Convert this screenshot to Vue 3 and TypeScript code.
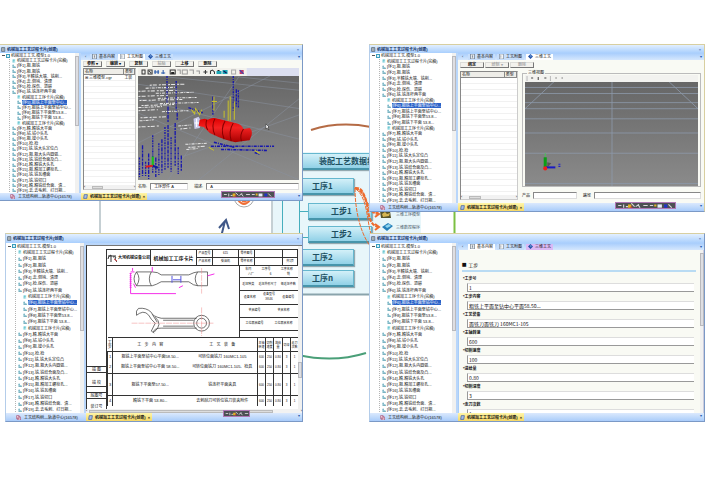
<script setup lang="ts">
interface TreeRow { t: string; l: number; k?: string; sel?: boolean }

const row = (t: string, l = 1, k = 'op', sel = false): TreeRow => ({ t, l, k, sel })

const head = (a: string, tail: TreeRow[]): TreeRow[] => [
  row('机械加工工艺-模型1.0', 0, 'root'),
  row('机械加工工艺过程卡片(完稿)', 1, 'card'),
  row('[序1]-粗-粗铣'),
  row('[序2]-粗-粗铣'),
  row('[序3]-半精铣大端、铣削...'),
  row('[序4]-去-倒钝、清理'),
  row('[序5]-检-探伤、退磁'),
  row('[序6]-铣-铣连杆两平面'),
  row('机械加工工序卡片(完稿)', 2, 'card'),
  row(a, 2, 'op', true),
  ...tail,
]

const tail: TreeRow[] = [
  row('[序7]-粗铣上平面至钻中心...', 2),
  row('[序8]-粗铣下平面至53.8...', 2),
  row('[序9]-粗铣下平面 53.8...', 2),
  row('机械加工工序卡片(完稿)', 2, 'card'),
  row('[序7]-精-精铣大平面'),
  row('[序8]-钻-钻小头孔'),
  row('[序9]-粗-镗小头孔'),
  row('[序10]-检-检'),
  row('[序11]-铣-铣大头定位凸'),
  row('[序12]-粗-粗大头内圆弧...'),
  row('[序13]-铣-铣结合面及凸...'),
  row('[序14]-精-精铣大头孔'),
  row('[序15]-粗-精加工螺栓孔...'),
  row('[序16]-铣-铣瓦槽面'),
  row('[序17]-铣-铣切口'),
  row('[序18]-精-精铣结合面、清...'),
  row('[序19]-去-去毛刺、打日期...'),
]

const treeA = head('[序5]-粗铣上平面至中心...', tail)
const treeB = head('[序6]-粗铣上平面至钻中心...', tail)

const title = '机械加工工艺过程卡片(创建)'
const docTab = '工艺结构树—轨道中心(16578)'

const wins = [
  { id: 'a', tree: treeA },
  { id: 'b', tree: treeB },
  { id: 'c', tree: treeB },
  { id: 'd', tree: treeB },
]

const fields = [
  ['工步号', '1'],
  ['工步内容', '粗铣上平面至钻中心平面58.50...'],
  ['工艺装备', '面铣刀面铣刀 160MC1-105'],
  ['主轴转速', '600'],
  ['切削速度', '100'],
  ['进给量', '0.80'],
  ['切削深度', '3'],
  ['走刀次数', '1'],
]

const whiteMarks = [
  [12, 9, 46], [8, 12, 38], [1, 15, 40], [18, 17, 55], [1, 20, 30], [20, 22, 58], [2, 24, 44], [22, 27, 60], [4, 29, 36],
  [1, 31, 24], [1, 34, 20], [24, 35, 50], [3, 41, 28], [2, 44, 16], [1, 50, 22], [40, 49, 53], [42, 52, 52],
  [47, 67, 68], [50, 70, 66], [48, 72, 60],
]
const blueColumns = [
  [2, 80, 100], [5, 68, 98], [8, 84, 99], [11, 76, 101], [15, 58, 96], [18, 80, 99], [21, 66, 97], [24, 62, 95], [27, 50, 93],
  [30, 48, 90], [33, 60, 94], [37, 46, 88], [40, 70, 96], [43, 78, 94], [29, 0, 26], [30, 30, 46],
  [38, 5, 34], [39, 36, 44], [94, 0, 34], [97, 13, 30], [99, 14, 32], [74, 20, 38],
]
const gridRows = [8, 14, 23, 29, 39, 53, 73, 103]
const process = [
  ['1', '粗铣上平面至钻中心平面58.50...', '可转位面铣刀 160MC1-105'],
  ['2', '粗铣上平面至钻中心平面 58.50...', '可转位面铣刀 160MC1-105、检具'],
  ['3', '粗铣下平面至57.50...', '铣连杆平面夹具'],
  ['4', '精铣下平面 53.80...', '去刺刮刀可转位铣刀装夹附件'],
]
</script>

<template>
  <main class="stage">
    <section class="board">
      <svg class="links" width="705" height="484" viewBox="0 0 705 484" aria-hidden="true">
        <rect x="100" y="150" width="172" height="100" fill="#fff" stroke="#8ba0a8" />
        <rect x="273" y="152" width="148" height="142" fill="#e8f6fa" />
        <path d="M273 294.500H421" stroke="#8aa4ac" stroke-width="2" />
        <path d="M282.500 170V280M299.500 170V240M299 211.500H309M299 237.500H309" fill="none" stroke="#46aebd" />
        <path d="M311 130Q339 121 371 127" fill="none" stroke="#b56b45" stroke-width="2" />
        <path d="M298 355Q334 363 366 353" fill="none" stroke="#4a9f78" stroke-width="2" />
        <path d="M454.500 212V233" stroke="#7cc043" stroke-width="2" />
        <circle cx="244" cy="197" r="10" fill="#fff" stroke="#a9a9a9" />
        <path d="M238 200Q244 208 250 200M241 199Q244 204 248 199" fill="none" stroke="#ef6e35" stroke-width="2" />
        <path d="M221 237L225 221M219 228L226 220L229 229" fill="none" stroke="#405888" stroke-width="2" />
      </svg>
      <div class="node wide">装配工艺数据组织</div>
      <div class="node n1">工序1</div>
      <div class="node step s1">工步1</div>
      <div class="node step s2">工步2</div>
      <div class="node n2">工序2</div>
      <div class="node n3">工序n</div>
      <svg class="links" width="705" height="484" viewBox="0 0 705 484" aria-hidden="true">
        <g fill="none" stroke="#ee6b2d" stroke-dasharray="4 1">
          <path d="M355 188C368 186 363 212 378 214" stroke-width="2" />
          <path d="M355 188C374 196 362 222 378 227" stroke-width="2" />
          <path d="M355 188C355 210 360 232 370 246" />
          <path d="M356 189C370 200 366 230 374 240" />
        </g>
        <path d="M375 211L379 214L375 217M375 224L379 227L375 230" fill="none" stroke="#ee6b2d" stroke-width="2" />
        <path d="M380 211h10l1 7h-10z" fill="#56532b" /><path d="M382 214l3-2 2 2 3-1-1 3-6 1z" fill="#d5b653" />
        <path d="M382 227l6-4 5 3-6 5z" fill="#247fb8" /><path d="M385 226l4-2 2 2-4 2z" fill="#8dd4ef" />
      </svg>
      <span class="tag t1">三维工序模型</span>
      <span class="tag t2">三维数控程序</span>
    </section>

    <section v-for="w in wins" :key="w.id" class="win" :class="'win-' + w.id">
      <header class="titlebar">
        <svg class="ico" viewBox="0 0 8 8"><path d="M1 1h5v6H1z" fill="#fff" stroke="#234" /><path d="M2 3h3M2 5h3" stroke="#234" /></svg>
        <h2>{{ title }}</h2>
        <button class="close" aria-label="关闭">×</button>
      </header>

      <div class="body">
        <nav class="tree">
          <ul>
            <li v-for="(r, i) in w.tree" :key="i" :class="['lv' + r.l, { sel: r.sel }]">
              <svg v-if="r.l === 0" class="twist" viewBox="0 0 3 3" aria-hidden="true"><path d="M0 1h3v1H0z" fill="#555" /></svg>
              <svg class="ico" viewBox="0 0 8 8" aria-hidden="true">
                <template v-if="r.k === 'root'"><rect width="8" height="8" fill="#3b9dbd" /><path d="M2 6V2h4v4z" fill="#d8f0f5" /></template>
                <template v-else-if="r.k === 'card'"><path d="M1 0h6v8H1z" fill="#dff7fa" /><path d="M2 1v6M2 2h4M4 2v5" stroke="#22a5b5" fill="none" /></template>
                <template v-else><path d="M1 1h3v3h3v3H1z" fill="#9fcddb" /><path d="M1 7h7M2 2v3" stroke="#2b8193" fill="none" /></template>
              </svg>
              <span>{{ r.t }}</span>
            </li>
          </ul>
          <div class="vbar"><i></i></div>
        </nav>
        <div class="split"></div>

        <div class="pane">
          <div v-if="w.id !== 'c'" class="tabs">
            <span class="arrow">‹</span>
            <button class="tab" :class="{ on: w.id === 'd' }"><svg class="ico" viewBox="0 0 8 8"><path d="M1 0h6v8H1zM3 2h2M3 4h2M3 6h2" fill="#fff" stroke="#456" /></svg>基本内容</button>
            <button class="tab" :class="{ on: w.id === 'a' }"><svg class="ico" viewBox="0 0 8 8"><path d="M1 0h6v8H1zM3 2v4" fill="#fff" stroke="#678" /></svg>工艺附图</button>
            <button class="tab" :class="{ on: w.id === 'b', pink: w.id === 'd' }"><svg class="ico" viewBox="0 0 8 8"><path d="M4 0l4 4-4 4-4-4z" fill="#2453a8" /><path d="M4 1l2 2-2 2z" fill="#89b9ed" /></svg>三维工艺</button>
            <span class="drop">▾</span>
          </div>

          <div v-if="w.id === 'a' || w.id === 'b'" class="model">
            <div class="actions">
              <template v-if="w.id === 'a'">
                <button>参照 ▾</button><button>编辑 ▾</button><button>复制</button><button class="off">粘贴</button><button>上移</button><button>删除</button>
              </template>
              <template v-else>
                <button>绑定</button><button class="off">绘制 ▾</button><button class="off">删除</button>
              </template>
            </div>
            <div class="work">
              <div class="list">
                <table>
                  <thead><tr><th>名称</th><th>类型</th></tr></thead>
                  <tbody>
                    <tr><td>{{ w.id === 'a' ? '⊞ 三维模型.cgr' : '' }}</td><td>{{ w.id === 'a' ? '工装' : '' }}</td></tr>
                  </tbody>
                </table>
                <div class="hbar"><span>‹</span><i></i><span>›</span></div>
              </div>
              <div class="right">
                <div v-if="w.id === 'a'" class="view">
                  <svg class="bar" viewBox="0 0 160 8" preserveAspectRatio="xMinYMid slice">
                    <rect width="108" height="8" fill="#f2f1ec" /><rect x="108" width="60" height="8" fill="#dcdff0" />
                    <g fill="none" stroke="#333"><path d="M4 2v4h3V2zM10 2h4v4h-4zM11 3l2 2" /><path d="M17 2v4M20 2v4M16 4h5M23 5h4M25 2v4" stroke="#25a" /><path d="M32 2h5v4h-5z" /><path d="M39 2h3v4M44 2h5v4h-5zM51 2h4v4M58 3h3v3" stroke="#999" /><path d="M65 4h4M67 2v4M72 6V3l2-1 2 2v2" /><path d="M93 2h4v4h-4z" stroke="#aaa" /></g>
                    <path d="M33 4h3v2h-3zM79 2h2v4h-2z" fill="#222" /><path d="M78 3h5v3h-5zM84 2h5v4h-5z" fill="#1ba6b5" /><path d="M85 3l3 2" stroke="#115" /><path d="M101 2h4v4h-4z" fill="#c13b68" /><path d="M101 2l4 4" stroke="#224cc5" />
                  </svg>
                  <svg class="scene" viewBox="0 0 159 102" preserveAspectRatio="xMidYMid slice">
                    <defs><linearGradient id="ga" x1="0" x2="0" y1="0" y2="1"><stop stop-color="#666" /><stop offset="1" stop-color="#8d8d8d" /></linearGradient>
                      <linearGradient id="gr" x1="0" x2="0" y1="0" y2="1"><stop stop-color="#d00" /><stop offset=".4" stop-color="#f42222" /><stop offset="1" stop-color="#a50000" /></linearGradient></defs>
                    <rect width="159" height="102" fill="url(#ga)" />
                    <path d="M0 8L159 32M0 22L159 62M20 0L159 14M60 102L159 22M0 66L130 0M0 36L159 102M0 95L159 38M90 0L159 7M100 0L30 102" fill="none" stroke="#8b93a0" stroke-width=".5" />
                    <g fill="none" stroke="#e7e7e7"><path v-for="(m, i) in whiteMarks" :key="i" :d="`M${m[0]} ${m[1]}L${m[2]} ${m[1] - 1}`" :stroke-dasharray="i % 2 ? '3 1 1 1' : '2 1 4 2'" /></g>
                    <g fill="none" stroke="#1717ad"><path v-for="(m, i) in blueColumns" :key="i" :d="`M${m[0]} ${m[1]}V${m[2]}`" :stroke-dasharray="i % 2 ? '4 1 2 1' : '2 1 1 1'" stroke-width="1.300" />
                      <path d="M72 69L134 69M82 72L127 73M115 75L120 77M50 31L64 36M75 65L95 70" stroke-dasharray="3 1 1 1" stroke-width="1.500" /></g>
                    <path d="M53 33l3 4 1-5 4 6 2-5M75 20v14M73 25h5M89 24v20M91 20v24M95 25v18M85 34v7M70 70l5 3M115 73l5 3" fill="none" stroke="#c8c12b" />
                    <path d="M55 42l5-2 3 5-2 6-5 1z" fill="#c8c9eb" /><path d="M56 46h5M58 42v8" stroke="#fff" />
                    <path d="M61 43l5-1 3 1q4-3 10-1l17 4q6 1 8 6l6-1q3 2 2 7l-2 5-8 1-6 1q-9-2-16-5l-9-4-6-6-5-1z" fill="url(#gr)" />
                    <path d="M68 43q-2 5 1 10M76 42q-4 7 0 16M86 44q-5 8-1 18M94 46q-5 8-2 18M104 52q-4 6-2 12" fill="none" stroke="#870000" />
                    <path d="M15 88V79" stroke="#19c519" stroke-width="2" /><path d="M15 88l5 2" stroke="#111b99" stroke-width="2" /><path d="M15 88l-7 1" stroke="#e21a1a" stroke-width="2" />
                    <path d="M126 47v5l1-1 2 2-1-3h1z" fill="#fff" stroke="#222" stroke-width=".5" />
                  </svg>
                </div>
                <fieldset v-else class="view">
                  <legend>三维视图</legend>
                  <svg class="bar" viewBox="0 0 170 7" preserveAspectRatio="xMinYMid slice"><rect width="170" height="7" fill="#f2f2ef" /><path d="M2 1v5M25 1v5" stroke="#bbb" /><path d="M6 3h2M13 2v3M19 3h2M30 3h1M36 3h1" stroke="#444" stroke-width="1" fill="none" /></svg>
                  <svg class="scene" viewBox="0 0 171 104" preserveAspectRatio="xMidYMid slice">
                    <defs><linearGradient id="gb" x1="0" x2="0" y1="0" y2="1"><stop stop-color="#666" /><stop offset="1" stop-color="#8b8b8b" /></linearGradient></defs>
                    <rect width="171" height="104" fill="url(#gb)" />
                    <g fill="none" stroke="#8d99ab" stroke-width=".8"><path v-for="y in gridRows" :key="y" :d="`M0 ${y - 2}H171`" /><path d="M86 0V104M29 0L0 27M142 0L171 27" /></g>
                    <path d="M20 85V75" stroke="#0a9d15" stroke-width="3" /><path d="M20 74v-3" stroke="#45c653" /><path d="M22 85l4-4-4-1z" fill="#555" /><path d="M20 85H30" stroke="#1a1ac0" stroke-width="2" /><circle cx="20" cy="86" r="2" fill="#ef1d1d" /><path d="M33 82h2M33 84h2" stroke="#22c" />
                  </svg>
                </fieldset>
                <div class="foot">
                  <label :for="'p-' + w.id">{{ w.id === 'a' ? '名称:' : '产品' }}</label><input :id="'p-' + w.id" class="short" :value="w.id === 'a' ? '工序部件 A' : ''">
                  <label :for="'q-' + w.id">{{ w.id === 'a' ? '描述:' : '路径' }}</label><input :id="'q-' + w.id" class="long" :value="w.id === 'a' ? 'A' : ''">
                </div>
              </div>
            </div>
          </div>

          <div v-else-if="w.id === 'c'" class="docwrap">
            <div class="doc">
              <div class="side"><span>描 图</span><span class="gap">描 校</span><span></span><span>底图号</span><span>装订号</span></div>
              <div class="sheet">
                <div class="dochead">
                  <div class="brand"><svg viewBox="0 0 10 8"><path d="M1 2h8M4 1v7M6 3q4-1 2 2l2 3M1 5q0-3 3-4" fill="none" stroke="#333" /><path d="M7 5l3 2" stroke="#d44" /></svg>大河机械设备公司</div>
                  <strong>机械加工工序卡片</strong>
                  <div class="cells"><span>产品型号</span><span>615</span><span>零件图号</span><span></span><span></span><span>产品名称</span><span>柴油机</span><span>零件名称</span><span></span><span>共1页</span></div>
                </div>
                <div class="docmid">
                  <svg class="drawing" viewBox="0 0 132 72">
                    <g fill="none" stroke="#333" stroke-width=".7">
                      <path d="M29 6h16q6 0 9 3h28q6-3 9-3h10v14H91q-4 0-9-4H54q-5 3-9 4H29q-5-7 0-14zM29 6q5 7 0 14M44 6q-4 7 0 14M91 6q-5 7 0 14" />
                      <circle cx="95" cy="58" r="8" /><circle cx="95" cy="58" r="5" />
                      <path d="M90 53H54Q45 51 44 47q-5-5-13-4-3 2-2 7M90 63H54Q47 63 46 67M56 55h31M56 61h31M29 50l3-2q7-4 12 6l4 4-4 8 3 2M48 52q8 7-1 15M45 49l5 8" />
                    </g>
                    <path d="M23 7v21h46M23 6h4M25 2v3M45 1v5M26 18l2 4M101 10l7-2M72 22l4-2" fill="none" stroke="#f42de8" />
                    <path d="M23 7v15" stroke="#f42de8" stroke-width="2" stroke-dasharray="1 1" /><path d="M65 10v7M74 10v7M66 14h8" stroke="#5454e0" fill="none" />
                    <path d="M24 58h84M95 2v26M95 42v29" stroke="#f08989" stroke-width=".5" stroke-dasharray="6 1" />
                  </svg>
                  <div class="info">
                    <p><span>车间</span><span>工序号</span><span>工序名称</span></p>
                    <p class="line"><span>八厂</span><span>6</span><span>铣</span></p>
                    <p class="line"><span>毛坯种类</span><span>毛坯外形尺寸</span><span>每毛坯件数</span></p>
                    <p class="line"><span>设备名称</span><span>设备型号<br>XK46</span><span>设备编号</span></p>
                    <p class="line"><span>夹具编号</span><span>夹具名称</span></p>
                    <p class="line"><span>工位器具编号</span><span>工位器具名称</span></p>
                    <p class="last"></p>
                  </div>
                </div>
                <table class="proc">
                  <colgroup><col class="c0"><col class="c1"><col class="c2"><col class="c3"><col class="c3"><col class="c4"><col class="c3"><col></colgroup>
                  <thead><tr><th>工步</th><th>工 &nbsp; 步 &nbsp; 内 &nbsp; 容</th><th>工 &nbsp; 艺 &nbsp; 装 &nbsp; 备</th><th>主轴转速</th><th>切削速度</th><th>进给量</th><th>切深</th><th>走刀次数</th></tr></thead>
                  <tbody><tr v-for="p in process" :key="p[0]"><td v-for="c in p" :key="c">{{ c }}</td><td>600</td><td>250</td><td>0.80</td><td>3</td><td>1</td></tr></tbody>
                </table>
              </div>
              <div class="vbar"><i></i></div>
            </div>
            <div class="hbar"><span>‹</span><i></i><span>›</span></div>
          </div>

          <div v-else class="formwrap">
            <form class="form">
              <h3><b>■</b> 工步</h3>
              <div class="fields">
                <div v-for="(f, i) in fields" :key="f[0]" class="field"><label :for="'f' + i">*{{ f[0] }}</label><input :id="'f' + i" :value="f[1]"></div>
              </div>
            </form>
            <div class="vbar"><i></i></div>
          </div>
        </div>
      </div>

      <footer class="dock">
        <button class="doc1"><svg class="ico" viewBox="0 0 8 8"><path d="M1 1h4v5H1zM3 3h4v5H3z" fill="#fff" stroke="#a33c65" /></svg>{{ docTab }}</button>
        <button class="doc2"><svg class="ico" viewBox="0 0 8 8"><path d="M2 1h5L6 7H1z" fill="#a9bfe2" stroke="#244ba5" /></svg>{{ title }}<span>×</span></button>
        <span class="drop">▾</span>
      </footer>

      <svg v-if="w.id !== 'd'" class="float" viewBox="0 0 54 6" preserveAspectRatio="xMinYMid slice" aria-hidden="true">
        <rect width="70" height="6" fill="#4d5054" />
        <path d="M2 3h3M7 2v3M9 4h2M14 1l3 3M18 4l3-2M20 2l2 3M25 3h4M31 3h3M48 2l3 3" stroke="#d9d9d9" fill="none" /><path d="M11 2h3v3h-3zM35 2h2v2h-2z" fill="#e3b427" /><path d="M13 4h2v1h-2z" fill="#d33" /><path d="M38 2h4v3h-4z" fill="#e8edf8" /><path d="M44 2h3v3h-3z" fill="#2032c9" />
      </svg>
    </section>
  </main>
</template>

<style>
html, body { margin: 0; background: #fff; }
</style>

<style scoped>
.stage { position: relative; min-height: 100vh; overflow: hidden; font: 4px/5px "Liberation Sans", "Noto Sans CJK SC", sans-serif; color: #111; }
.stage * { box-sizing: border-box; }
button, input { font: inherit; color: inherit; margin: 0; padding: 0; border: 0; background: none; border-radius: 0; min-width: 0; white-space: nowrap; }
ul, h2, h3, p, fieldset { margin: 0; padding: 0; list-style: none; }
svg { display: block; }
i { display: block; }
.links { position: absolute; left: 0; top: 0; }
.node { position: absolute; display: flex; align-items: center; height: 17px; border: 1px solid #65b7ce; border-bottom: 2px solid #4795ab; background: linear-gradient(#d3f0f8, #91d1e7); color: #1d5062; font: bold 8px/12px "Noto Sans CJK SC", sans-serif; box-shadow: 1px 1px 1px #93a9b0; white-space: nowrap; }
.wide { left: 290px; top: 153px; width: 120px; padding-left: 28px; }
.n1, .n2, .n3 { left: 290px; width: 64px; padding-left: 21px; }
.n1 { top: 178px; }
.n2 { top: 249px; }
.n3 { top: 270px; }
.step { left: 308px; width: 64px; padding-left: 22px; }
.s1 { top: 203px; }
.s2 { top: 226px; }
.tag { position: absolute; left: 396px; color: #456; white-space: nowrap; }
.t1 { top: 212px; }
.t2 { top: 225px; }

.win { position: absolute; display: flex; flex-direction: column; border: 1px solid #7b99c6; border-top-color: #d8cfa0; border-left-color: #b4cdea; background: #f9faf4; }
.win-a { --tree: 79px; left: -1px; top: 44px; width: 304px; height: 157px; }
.win-b { --tree: 86px; left: 369px; top: 44px; right: 0; height: 168px; border-right-color: #d8cfa0; }
.win-c { --tree: 78px; left: 5px; top: 233px; width: 298px; height: 189px; }
.win-d { --tree: 86px; left: 369px; top: 233px; right: 0; height: 189px; }
.ico { flex: none; width: 5px; height: 5px; }
.titlebar { flex: none; display: flex; align-items: center; gap: 1px; height: 8px; padding: 0 3px 0 1px; background: linear-gradient(#e2efff, #a9cffd); color: #0c2b62; }
.win-c .titlebar, .win-d .titlebar { height: 9px; }
.titlebar h2 { flex: 1; font-size: 4px; font-weight: bold; }
.close { color: #1c4a9a; }
.body { flex: 1; min-height: 0; display: flex; }
.tree { flex: none; width: var(--tree); display: flex; background: #fff; overflow: hidden; }
.tree ul { flex: 1; min-width: 0; display: flex; flex-direction: column; background: repeating-linear-gradient(#b5b5b5 0 1px, transparent 1px 2px) 9px 6px / 1px 100% no-repeat; }
.tree li { flex: 1; min-height: 0; display: flex; align-items: center; gap: 1px; line-height: 5px; white-space: nowrap; }
.tree .ico { width: 4px; height: 4px; }
.twist { width: 3px; height: 3px; }
.lv0 { padding-left: 2px; }
.lv1 { padding-left: 12px; }
.lv2 { padding-left: 17px; }
.sel span { background: #2b62c8; color: #fff; }
.vbar { flex: none; width: 4px; background: #f1f1f0; }
.vbar i { width: 4px; height: 50%; margin-top: 3px; border: 1px solid #b9b9bd; background: #dedee2; }
.split { flex: none; width: 2px; background: #b9d6fa; }
.pane { flex: 1; min-width: 0; display: flex; flex-direction: column; }
.tabs { flex: none; display: flex; align-items: center; height: 7px; gap: 2px; padding-left: 4px; background: linear-gradient(#a8cdfc, #d5e7fd); }
.win-a .tabs { gap: 1px; }
.tab { display: flex; align-items: center; gap: 2px; height: 6px; padding: 0 2px; background: #c7defb; }
.tab.on { background: #fff; }
.tab.pink { background: #dbb9f5; }
.arrow { width: 4px; color: #245; }
.drop { margin-left: auto; padding-right: 2px; color: #2a58a6; }

.model { flex: 1; min-height: 0; display: flex; flex-direction: column; padding: 1px 3px 3px 2px; }
.actions { flex: none; display: flex; gap: 4px; height: 6px; }
.actions button { width: 19px; line-height: 4px; border: 1px solid #dcdcd8; border-bottom-color: #777; border-right-color: #777; background: #f3f2ed; font-weight: bold; }
.actions .off { color: #aaa; }
.work { flex: 1; min-height: 0; display: flex; gap: 2px; padding-top: 1px; }
.list { flex: none; width: 53px; display: flex; flex-direction: column; border: 1px solid #888; border-right-color: #ccc; border-bottom-color: #ccc; background: repeating-linear-gradient(#fff 0 5px, #f1f1f1 5px 6px); }
.list table { width: 100%; border-collapse: collapse; table-layout: fixed; line-height: 5px; }
.list th { padding: 0 1px; text-align: left; font-weight: normal; white-space: nowrap; background: #eeede8; border-right: 1px solid #888; border-bottom: 1px solid #888; }
.list th:first-child { width: 78%; }
.list td { padding: 0 1px; white-space: nowrap; height: 5px; }
.hbar { flex: none; margin-top: auto; display: flex; justify-content: space-between; align-items: center; height: 4px; background: #f2f2f2; line-height: 4px; }
.hbar i { width: 20%; height: 3px; margin-right: auto; margin-left: 7px; border: 1px solid #bbb; background: #ddd; }
.right { flex: 1; min-width: 0; display: flex; flex-direction: column; }
.view { flex: 1; min-width: 0; min-height: 0; display: flex; flex-direction: column; border: 0; }
.bar { flex: none; width: 100%; height: 8px; }
.scene { flex: 1; min-height: 0; width: 100%; }
.foot { flex: none; display: flex; align-items: center; height: 10px; padding-top: 2px; gap: 3px; }
.foot input { height: 7px; border: 1px solid #888; border-right-color: #ddd; border-bottom-color: #ddd; background: #fff; padding-left: 3px; line-height: 5px; }
.foot .short { width: 38px; margin-right: 3px; }
.foot .long { flex: 1; }
.win-b .model { padding-top: 2px; }
.win-b .work { gap: 4px; padding-top: 3px; }
.win-b .actions { gap: 1px; }
.win-b .actions button { width: 24px; }
.win-b .list { width: 58px; }
.win-b .foot { height: 13px; padding-top: 4px; }
.win-b .short { width: 44px; }
.win-b .view { border: 1px solid #bbb; padding: 0 2px 1px; }
.win-b legend { padding: 0 1px; margin-left: 2px; line-height: 4px; }
.win-b .bar { height: 7px; }
.win-b .scene { height: 104px; flex: none; }

.docwrap { flex: 1; min-height: 0; display: flex; flex-direction: column; border-top: 2px solid #b9d6fa; }
.doc { flex: 1; min-height: 0; display: flex; background: #fff; border-left: 1px solid #333; border-top: 1px solid #777; }
.side { flex: none; width: 19px; display: flex; flex-direction: column; justify-content: flex-end; }
.side span { height: 6px; border-top: 1px solid #333; text-align: center; line-height: 5px; white-space: nowrap; }
.side .gap { height: 14px; padding-top: 7px; }
.side span:last-child { height: 11px; padding-top: 5px; }
.sheet { flex: 1; min-width: 0; margin-top: 3px; border-left: 1px solid #333; border-top: 1px solid #333; display: flex; flex-direction: column; }
.dochead { flex: none; display: flex; height: 16px; border-bottom: 1px solid #333; }
.brand { flex: none; width: 44px; display: flex; align-items: center; gap: 1px; font-weight: bold; white-space: nowrap; border-right: 1px solid #333; }
.brand svg { width: 10px; height: 8px; }
.dochead strong { flex: none; width: 46px; text-align: center; font-size: 5px; line-height: 16px; border-right: 1px solid #333; white-space: nowrap; }
.cells { flex: 1; display: grid; grid-template-columns: 16px 26px 16px 28px 1fr; grid-template-rows: 8px 8px; }
.cells span { border-right: 1px solid #333; text-align: center; white-space: nowrap; line-height: 7px; font-size: 3px; }
.cells span:nth-child(-n+5) { border-bottom: 1px solid #333; }
.docmid { flex: none; height: 71px; display: flex; }
.drawing { flex: none; width: 132px; height: 71px; }
.info { flex: 1; min-width: 0; display: flex; flex-direction: column; border-left: 1px solid #333; font-size: 3px; line-height: 5px; }
.info p { flex: 1; display: flex; align-items: center; justify-content: space-around; text-align: center; white-space: nowrap; }
.info .line { border-bottom: 1px solid #333; }
.info p:nth-child(-n+2), .info .last { flex: none; height: 6px; }
.proc { width: 100%; border-collapse: collapse; table-layout: fixed; border-top: 1px solid #333; line-height: 4px; }
.proc th, .proc td { padding: 0; border-left: 1px solid #333; text-align: center; font-weight: normal; }
.proc th:nth-child(n+4), .proc td:nth-child(n+4) { font-size: 3px; }
.proc th:nth-child(3), .proc td:nth-child(3), .proc th:first-child { border-left: 0; }
.proc thead tr { height: 14px; border-bottom: 1px solid #333; }
.proc tbody tr { height: 10px; }
.proc tbody tr:nth-child(2) { height: 12px; border-bottom: 1px solid #333; }
.proc tbody tr:nth-child(3) { height: 22px; border-bottom: 1px solid #333; }
.proc td { white-space: nowrap; }
.c0 { width: 5px; }
.c1 { width: 75px; }
.c2 { width: 70px; }
.c3 { width: 8px; }
.c4 { width: 9px; }
.doc .vbar i { height: 10%; margin-top: 116px; }
.docwrap .hbar i { width: 85%; margin-left: 2px; }

.formwrap { flex: 1; min-height: 0; display: flex; border-left: 1px solid #a9cdf8; }
.form { flex: 1; min-width: 0; display: flex; flex-direction: column; padding: 11px 4px 0 3px; overflow: hidden; }
.form h3 { flex: none; height: 11px; border-bottom: 2px solid #b9dbf3; font-size: 5px; line-height: 7px; font-weight: normal; }
.form h3 b { font-size: 8px; }
.fields { flex: 1; min-height: 0; padding: 3px 2px 0 1px; overflow: hidden; }
.field { height: 18px; }
.field label { display: block; height: 8px; line-height: 7px; font-weight: bold; }
.field input { display: block; width: calc(100% - 4px); height: 9px; margin-left: 4px; padding: 0 0 0 1px; font: 5px/7px "Noto Sans CJK SC", sans-serif; border: 1px solid #999; border-top-color: #ddd; border-right: 0; background: #fff; }
.formwrap .vbar { border-right: 1px solid #ccd; }
.formwrap .vbar i { height: 45%; }

.dock { flex: none; display: flex; align-items: stretch; height: 7px; background: linear-gradient(#dbe9fd, #a9ccfa); }
.win-b .dock, .win-c .dock, .win-d .dock { height: 8px; }
.dock button { display: flex; align-items: center; gap: 3px; padding-right: 2px; }
.doc1 { flex: none; width: calc(var(--tree) + 2px); padding-left: 10px; }
.dock .doc2 { gap: 2px; background: linear-gradient(#fff6a8, #f5d766); padding: 0 2px; font-weight: bold; }
.float { position: absolute; left: 221px; bottom: 2px; width: 54px; height: 7px; border: 1px solid #b078b5; }
.win-b .float { left: 245px; width: 61px; }
.win-c .float { left: 217px; width: 27px; bottom: 4px; }
</style>
